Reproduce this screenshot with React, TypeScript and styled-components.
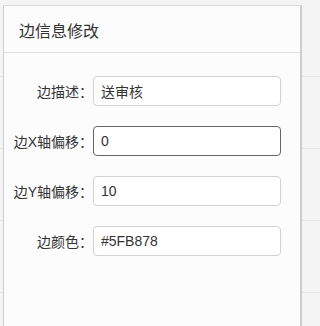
import { createGlobalStyle, styled } from 'styled-components';

const GlobalStyle = createGlobalStyle`
  html, body {
    margin: 0;
    padding: 0;
    background: #f4f4f4;
  }
  body {
    font-family: "Liberation Sans", "Noto Sans CJK SC", sans-serif;
    color: #333;
  }
`;

interface IField {
  label: string;
  value: string;
  focused?: boolean;
}

const fields: IField[] = [
  { label: '边描述：', value: '送审核' },
  { label: '边X轴偏移：', value: '0', focused: true },
  { label: '边Y轴偏移：', value: '10' },
  { label: '边颜色：', value: '#5FB878' },
];

const App = () => {
  return (
    <>
      <GlobalStyle />
      <Page>
        <Panel>
          <Header>
            <Title>边信息修改</Title>
          </Header>
          <Form>
            {fields.map((f) => (
              <Row key={f.label}>
                <Label>{f.label}</Label>
                <Input $focused={f.focused} defaultValue={f.value} readOnly />
              </Row>
            ))}
          </Form>
        </Panel>
      </Page>
    </>
  );
};

const Page = styled.div`
  height: 326px;
  padding: 5px 0 0 3px;
  box-sizing: border-box;
  overflow: hidden;
  background:
    repeating-linear-gradient(
      to bottom,
      transparent 0,
      transparent 71px,
      #e6e6e6 71px,
      #e6e6e6 72px
    ) 0 5px,
    #f4f4f4;
`;

const Panel = styled.div`
  width: 299px;
  height: 330px;
  box-sizing: border-box;
  background: #fcfcfc;
  border-top: 1px solid #dcdcdc;
  border-left: 1px solid #cfcfcf;
  border-right: 2px solid #cdcdcd;
`;

const Header = styled.div`
  height: 47px;
  box-sizing: border-box;
  padding: 14px 15px 0;
  border-bottom: 1px solid #e2e2e2;
`;

const Title = styled.div`
  font-size: 16px;
  line-height: 24px;
  color: #333;
`;

const Form = styled.div`
  display: flex;
  flex-direction: column;
  gap: 20px;
  padding-top: 23px;
`;

const Row = styled.div`
  display: flex;
  align-items: center;
  height: 30px;
`;

const Label = styled.label`
  width: 89px;
  text-align: right;
  font-size: 14px;
  color: #333;
  white-space: nowrap;
`;

const Input = styled.input<{ $focused?: boolean }>`
  width: 188px;
  height: 30px;
  box-sizing: border-box;
  padding: 0 7px;
  border: 1px solid ${(p) => (p.$focused ? '#666' : '#d2d2d2')};
  border-radius: 4px;
  background: #fff;
  font-family: "Liberation Sans", "Noto Sans CJK SC", sans-serif;
  font-size: 14px;
  color: #333;
  outline: none;
`;

export default App;
